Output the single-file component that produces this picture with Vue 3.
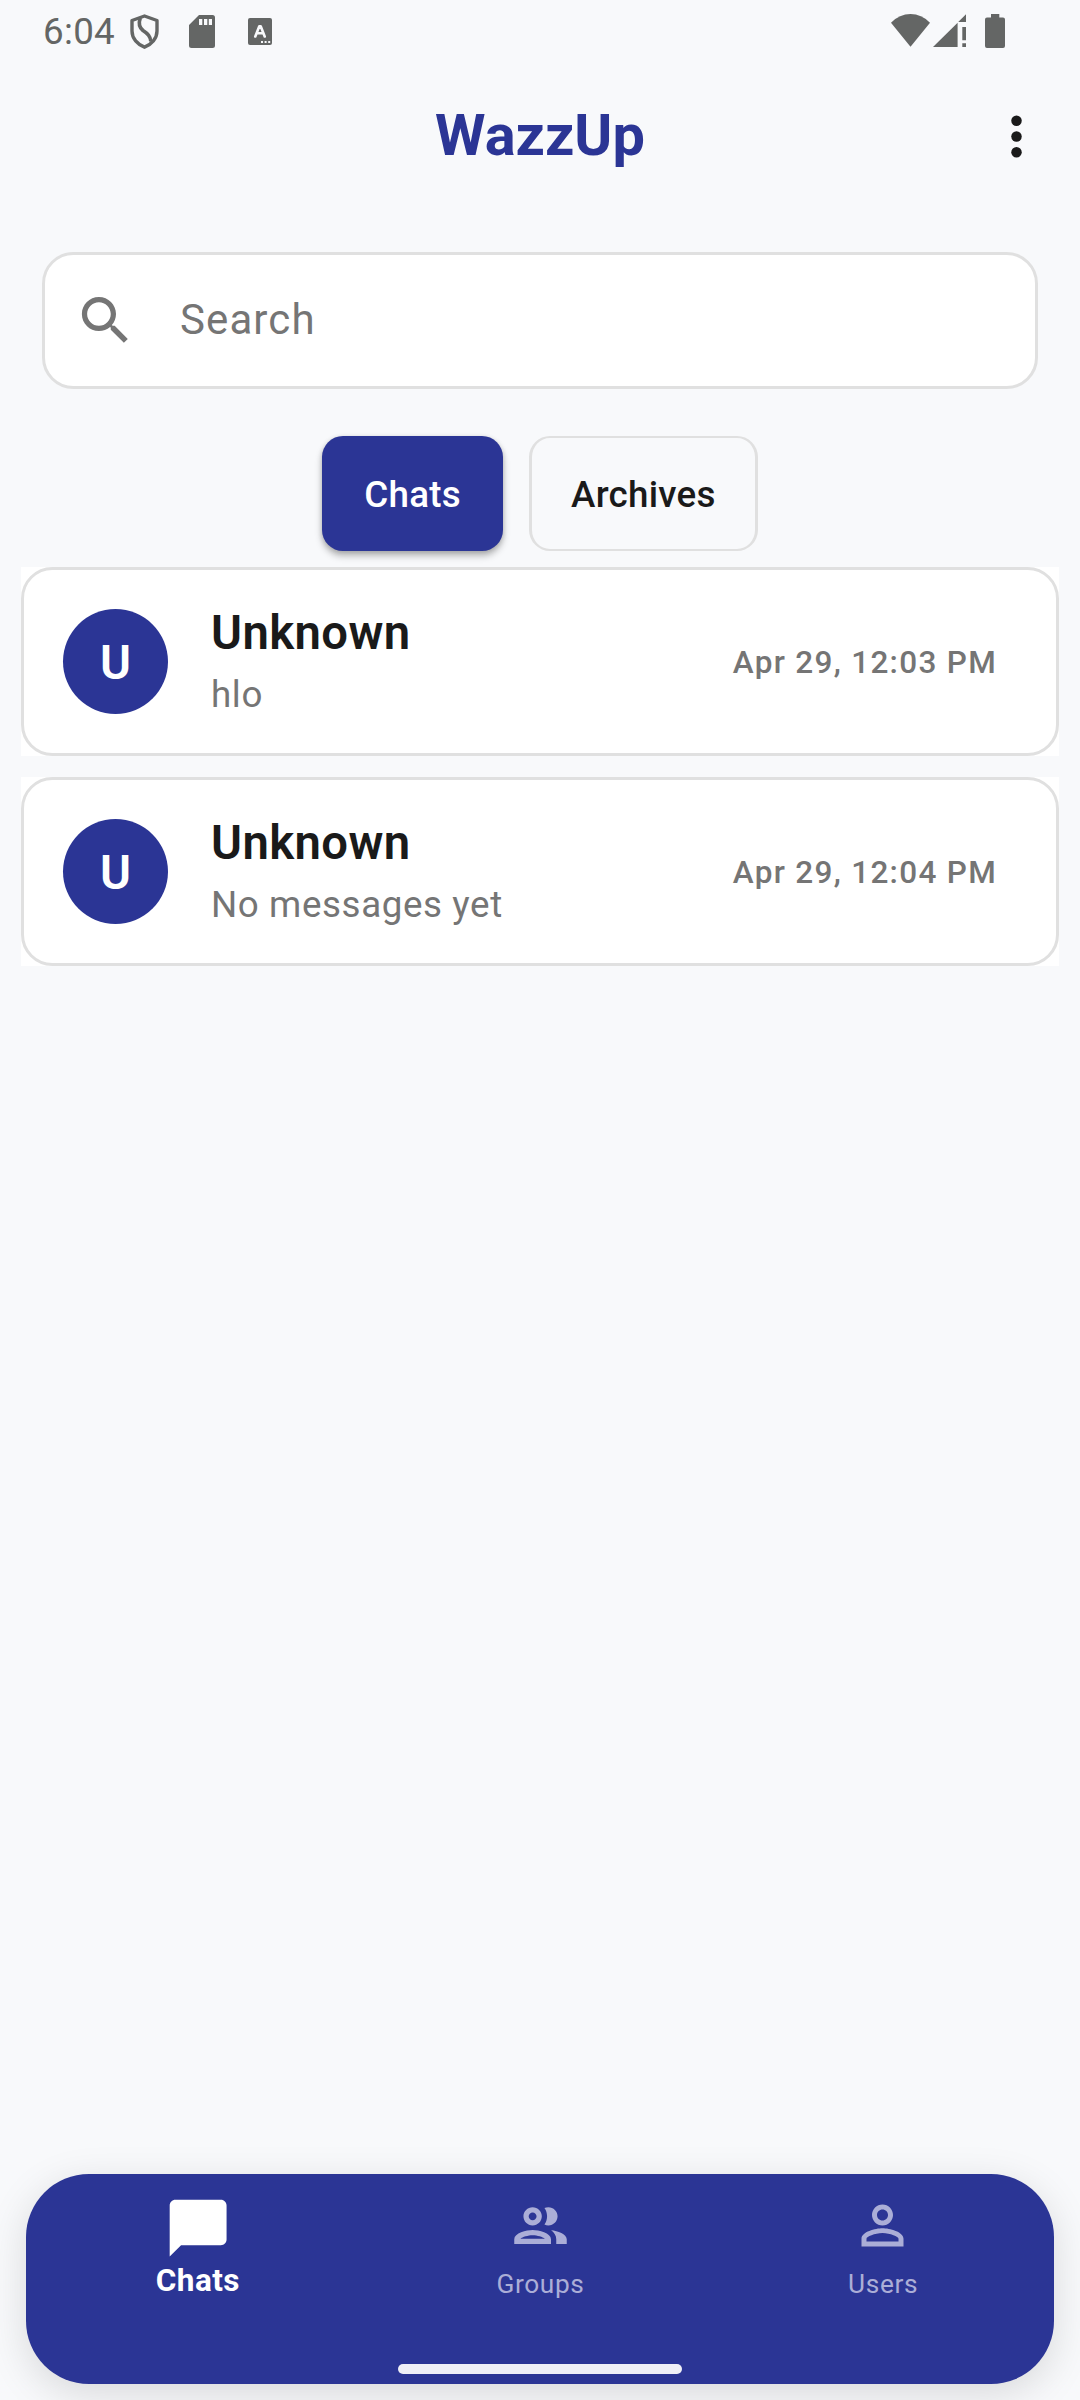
<script setup>
import { ref } from 'vue'

const activeFilter = ref('Chats')
const filters = ['Chats', 'Archives']
const chats = [
  { id: 1, name: 'Unknown', message: 'hlo', time: 'Apr 29, 12:03 PM' },
  { id: 2, name: 'Unknown', message: 'No messages yet', time: 'Apr 29, 12:04 PM' },
]
</script>

<template>
  <div class="screen">
    <div class="status">
      <span class="clock">6:04</span>
      <svg class="shield" viewBox="129 13 31 37" width="31" height="37">
        <path d="M144.5 16 L157 20.5 V31 C157 38.500 151.500 44.500 144.500 47.200 C137.500 44.500 132 38.500 132 31 V20.500 Z" fill="none" stroke="#646665" stroke-width="3.400" stroke-linejoin="round" />
        <path d="M140.300 18 C138.500 23 139.300 27.500 143 30.500 C147.500 33.500 150.500 36 150.800 41.500" fill="none" stroke="#646665" stroke-width="3.600" />
      </svg>
      <svg class="sd" viewBox="189 15 26 33" width="26" height="33">
        <path fill="#646665" fill-rule="evenodd" d="M199 15H212.500Q215 15 215 17.500V45.500Q215 48 212.500 48H191.500Q189 48 189 45.500V25ZM199 19V25H202.300V19ZM204 19V25H207.300V19ZM208.800 19V25H212V19Z" />
      </svg>
      <svg class="keyboard" viewBox="248 18 24 27" width="24" height="27">
        <rect x="248" y="18" width="24" height="27" rx="2" fill="#646665" />
        <path d="M255.300 36.500L259.300 26.200H260.700L264.700 36.500M256.800 33.300H263.200" fill="none" stroke="#f8f9fb" stroke-width="2.600" stroke-linecap="round" stroke-linejoin="round" />
        <path d="M261 41h2v2h-2zM264.600 41h2v2h-2zM268.200 41h2v2h-2z" fill="#f8f9fb" />
      </svg>
      <svg class="wifi" viewBox="891 14 39 33" width="39" height="33">
        <path fill="#646665" d="M891 22.700Q899.500 14 910.500 14T930 22.700L910.500 46.700Z" />
      </svg>
      <svg class="signal" viewBox="933 14 33 33" width="33" height="33">
        <path fill="#646665" d="M933 47L957.600 22.700V47ZM958.200 22L966 14.200V22ZM962.300 27H966V40.200H962.300ZM962.300 43.300H966V47H962.300Z" />
      </svg>
      <svg class="battery" viewBox="985 14 20 34" width="20" height="34">
        <path fill="#646665" d="M991 14H999.300V17.500H1003Q1005 17.500 1005 19.500V46Q1005 48 1003 48H987Q985 48 985 46V19.500Q985 17.500 987 17.500H991Z" />
      </svg>
    </div>

    <header class="appbar">
      <h1 class="title">WazzUp</h1>
      <svg class="more" viewBox="0 0 24 24" width="63" height="63" fill="#1a1a1a">
        <circle cx="12" cy="6" r="2" /><circle cx="12" cy="12" r="2" /><circle cx="12" cy="18" r="2" />
      </svg>
    </header>

    <div class="search">
      <svg viewBox="0 0 24 24" width="63" height="63" fill="#757575">
        <path d="M15.500 14h-.79l-.28-.27C15.410 12.590 16 11.110 16 9.500 16 5.910 13.090 3 9.500 3S3 5.910 3 9.500 5.910 16 9.500 16c1.610 0 3.090-.59 4.230-1.570l.27.28v.79l5 4.990L20.490 19l-4.990-5zm-6 0C7.010 14 5 11.990 5 9.500S7.010 5 9.500 5 14 7.010 14 9.500 11.990 14 9.500 14z" />
      </svg>
      <span class="placeholder">Search</span>
    </div>

    <div class="filters">
      <button
        v-for="f in filters"
        :key="f"
        class="filter"
        :class="{ active: f === activeFilter }"
        @click="activeFilter = f"
      >{{ f }}</button>
    </div>

    <main class="list">
      <div v-for="c in chats" :key="c.id" class="tile">
        <div class="card">
          <div class="avatar">{{ c.name[0] }}</div>
          <div class="info">
            <div class="name">{{ c.name }}</div>
            <div class="message">{{ c.message }}</div>
          </div>
          <div class="time">{{ c.time }}</div>
        </div>
      </div>
    </main>

    <nav class="nav">
      <div class="tabs">
        <div class="tab selected">
          <svg viewBox="0 0 24 24" width="68.250" height="68.250" fill="#fff">
            <path d="M20 2H4c-1.100 0-2 .9-2 2v18l4-4h14c1.100 0 2-.9 2-2V4c0-1.100-.9-2-2-2z" />
          </svg>
          <span class="label">Chats</span>
        </div>
        <div class="tab">
          <svg viewBox="0 0 24 24" width="63" height="63" fill="#abaed7">
            <path d="M9 13.750c-2.340 0-7 1.170-7 3.500V19h14v-1.750c0-2.330-4.660-3.500-7-3.500zM4.340 17c.84-.58 2.870-1.250 4.660-1.250s3.820.67 4.660 1.250H4.340zM9 12c1.930 0 3.500-1.570 3.500-3.500S10.930 5 9 5 5.500 6.570 5.500 8.500 7.070 12 9 12zm0-5c.83 0 1.500.67 1.500 1.500S9.830 10 9 10s-1.500-.67-1.500-1.500S8.170 7 9 7zm7.040 6.810c1.160.84 1.960 1.960 1.960 3.440V19h4v-1.750c0-2.020-3.500-3.170-5.960-3.440zM15 12c1.930 0 3.500-1.570 3.500-3.500S16.930 5 15 5c-.54 0-1.040.13-1.500.35.63.89 1 1.980 1 3.150s-.37 2.260-1 3.150c.46.22.96.35 1.500.35z" />
          </svg>
          <span class="label">Groups</span>
        </div>
        <div class="tab">
          <svg viewBox="0 0 24 24" width="63" height="63" fill="#abaed7">
            <path d="M12 5.900c1.160 0 2.100.94 2.100 2.100s-.94 2.100-2.100 2.100S9.900 9.160 9.900 8s.94-2.100 2.100-2.100m0 9c2.970 0 6.100 1.460 6.100 2.100v1.100H5.900V17c0-.64 3.130-2.100 6.100-2.100M12 4C9.790 4 8 5.790 8 8s1.790 4 4 4 4-1.790 4-4-1.790-4-4-4zm0 9c-2.670 0-8 1.340-8 4v3h16v-3c0-2.660-5.330-4-8-4z" />
          </svg>
          <span class="label">Users</span>
        </div>
      </div>
      <div class="handle"></div>
    </nav>
  </div>
</template>

<style>
body {
  margin: 0;
  background: #f8f9fb;
}
</style>

<style scoped>
.screen {
  box-sizing: border-box;
  width: 1080px;
  height: 2400px;
  display: flex;
  flex-direction: column;
  background: #f8f9fb;
  font-family: Roboto, "Liberation Sans", sans-serif;
  overflow: hidden;
}
svg {
  display: block;
  flex: none;
}
.status {
  height: 63px;
  display: flex;
  align-items: flex-start;
  padding-right: 75px;
}
.clock {
  margin-left: 43px;
  width: 86px;
  font-size: 36.75px;
  line-height: 42px;
  letter-spacing: 0.3px;
  margin-top: 11px;
  color: #646665;
}
.shield { margin-top: 13px; }
.sd { margin: 15px 0 0 29px; }
.keyboard { margin: 18px 0 0 33px; }
.wifi { margin: 14px 0 0 auto; }
.signal { margin: 14px 0 0 3px; }
.battery { margin: 14px 0 0 19px; }
.appbar {
  height: 147px;
  display: grid;
  grid-template-columns: 1fr auto 1fr;
  align-items: center;
}
.title {
  margin: 0;
  padding-bottom: 4px;
  grid-column: 2;
  font-size: 57.75px;
  line-height: 68px;
  font-weight: 700;
  color: #2b3595;
}
.more {
  justify-self: end;
  margin-right: 32px;
}
.search {
  box-sizing: border-box;
  height: 137px;
  margin: 42px 42px 0;
  border: 3px solid #e0e0e0;
  border-radius: 31.5px;
  background: #fff;
  display: flex;
  align-items: center;
  padding-left: 29px;
}
.placeholder {
  margin-left: 43px;
  padding-bottom: 3px;
  font-size: 42px;
  letter-spacing: 1.1px;
  color: #757575;
}
.filters {
  margin-top: 47px;
  display: flex;
  justify-content: center;
  gap: 26px;
}
.filter {
  box-sizing: border-box;
  height: 115px;
  padding: 2px 39px 0;
  border: solid #e0e0e0;
  border-width: 2px 3px;
  border-radius: 21px;
  background: transparent;
  font: 500 36.75px/44px Roboto, sans-serif;
  letter-spacing: 0.26px;
  color: #1a1a1a;
}
.filter.active {
  padding: 2px 42px 0;
  border: 0;
  background: #2b3595;
  color: #fff;
  box-shadow: 0 5px 7px rgba(0, 0, 0, 0.26), 0 1px 5px rgba(0, 0, 0, 0.14);
}
.list {
  margin: 16px 21px 0;
  display: flex;
  flex-direction: column;
  gap: 21px;
  flex: 1;
}
.tile { background: #fff; }
.card {
  box-sizing: border-box;
  height: 189px;
  border: 3px solid #e0e0e0;
  border-radius: 31.5px;
  display: flex;
  align-items: center;
  padding: 0 59px 0 39px;
}
.avatar {
  width: 105px;
  height: 105px;
  border-radius: 50%;
  background: #2b3595;
  color: #fff;
  font-size: 47.25px;
  font-weight: 600;
  line-height: 108px;
  text-align: center;
}
.info {
  margin-left: 43px;
  flex: 1;
}
.name {
  font-size: 47.25px;
  line-height: 63px;
  font-weight: 600;
  letter-spacing: 0.4px;
  color: #1a1a1a;
}
.message {
  font-size: 36.75px;
  line-height: 52px;
  margin-top: 4px;
  letter-spacing: 0.6px;
  color: #757575;
}
.time {
  padding-top: 2px;
  font-size: 31.5px;
  font-weight: 500;
  letter-spacing: 1.3px;
  color: #757575;
}
.nav {
  height: 210px;
  margin: 0 26px 16px;
  border-radius: 63px;
  background: #2b3595;
  box-shadow: 0 10px 40px rgba(0, 0, 0, 0.13);
  display: flex;
  flex-direction: column;
  align-items: center;
}
.tabs {
  width: 100%;
  height: 190px;
  display: flex;
}
.tab {
  flex: 1;
  display: flex;
  flex-direction: column;
  align-items: center;
  padding-top: 20px;
}
.label {
  margin-top: 10px;
  font-size: 26.25px;
  line-height: 34px;
  letter-spacing: 0.65px;
  padding-left: 1px;
  color: #abaed7;
}
.selected svg { margin-left: 1px; }
.selected .label {
  margin-top: 0;
  font-size: 31.5px;
  line-height: 38px;
  font-weight: 700;
  letter-spacing: 0.4px;
  color: #fff;
}
.handle {
  width: 284px;
  height: 10px;
  border-radius: 5px;
  background: #efeff7;
}
</style>
